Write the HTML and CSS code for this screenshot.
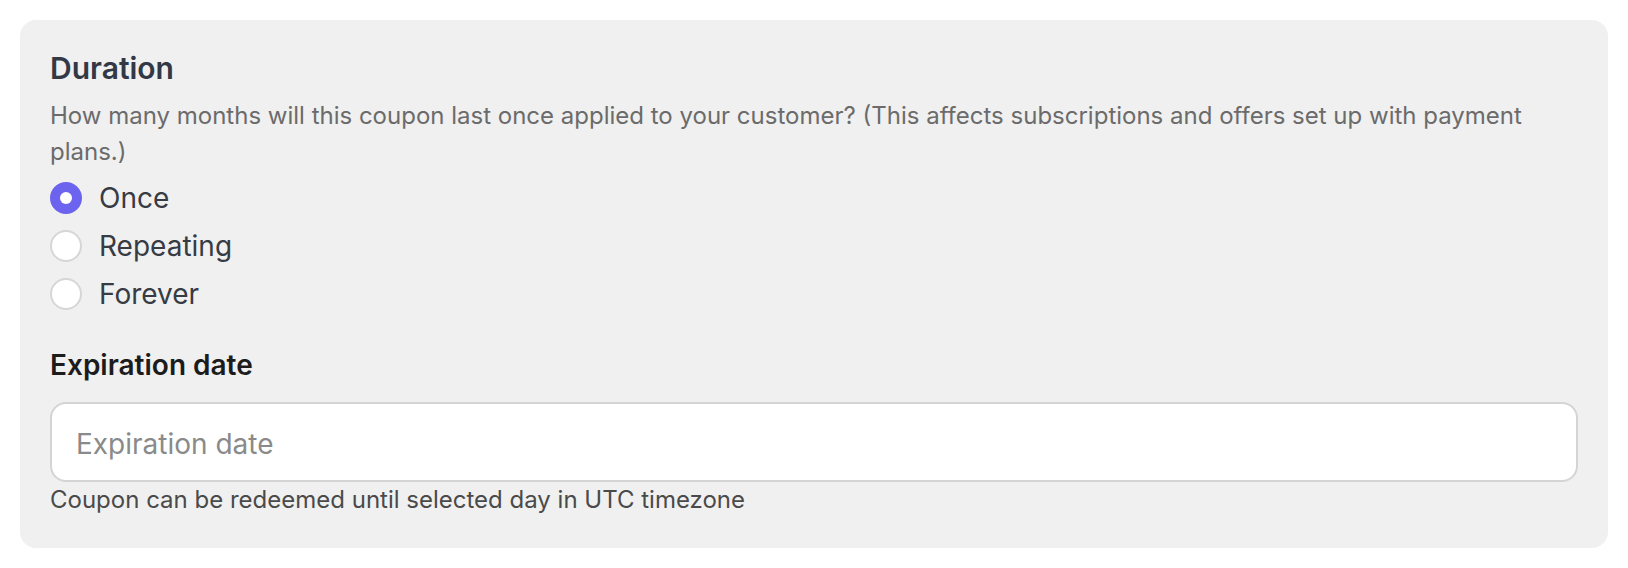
FILE: index.html
```html
<!DOCTYPE html>
<html lang="en">
<head>
<meta charset="utf-8">
<title>Coupon duration</title>
<link rel="stylesheet" href="styles.css">
</head>
<body>
<section class="card">
  <h2 class="title">Duration</h2>
  <p class="desc">How many months will this coupon last once applied to your customer? (This affects subscriptions and offers set up with payment plans.)</p>
  <div class="radios">
    <label class="radio-row"><span class="radio checked"></span><span class="radio-label">Once</span></label>
    <label class="radio-row"><span class="radio"></span><span class="radio-label">Repeating</span></label>
    <label class="radio-row"><span class="radio"></span><span class="radio-label">Forever</span></label>
  </div>
  <h3 class="field-title">Expiration date</h3>
  <div class="input"><span class="placeholder">Expiration date</span></div>
  <p class="help">Coupon can be redeemed until selected day in UTC timezone</p>
</section>
</body>
</html>
```
FILE: styles.css
```css
* { box-sizing: border-box; }
html, body { margin: 0; background: #ffffff; }
body {
  padding: 20px;
  font-family: Inter, "Noto Sans", "Liberation Sans", sans-serif;
}
.card {
  background: #f0f0f0;
  border-radius: 16px;
  padding: 30px 30px 32px 30px;
  height: 528px;
}
.title {
  margin: 0 0 12px 0;
  font-size: 30px;
  line-height: 36px;
  font-weight: 600;
  color: #323845;
}
.desc {
  margin: 0 0 4px 0;
  font-size: 24px;
  line-height: 36px;
  color: #6b6b6b;
}
.radios {
  display: flex;
  flex-direction: column;
}
.radio-row {
  display: flex;
  align-items: center;
  height: 48px;
  gap: 17px;
}
.radio {
  width: 32px;
  height: 32px;
  border-radius: 50%;
  background: #ffffff;
  border: 2px solid #d6d6d6;
  flex: none;
  display: flex;
  align-items: center;
  justify-content: center;
}
.radio.checked {
  background: #6c63ef;
  border-color: #6c63ef;
}
.radio.checked::after {
  content: "";
  width: 12px;
  height: 12px;
  border-radius: 50%;
  background: #ffffff;
}
.radio-label {
  font-size: 28px;
  line-height: 48px;
  color: #363b44;
}
.field-title {
  margin: 29px 0 19px 0;
  font-size: 28px;
  line-height: 36px;
  font-weight: 600;
  color: #1c1c1c;
}
.input {
  height: 80px;
  background: #ffffff;
  border: 2px solid #d4d4d4;
  border-radius: 16px;
  display: flex;
  align-items: center;
  padding: 4px 24px 0 24px;
}
.placeholder {
  font-size: 28px;
  color: #8a8a8a;
}
.help {
  margin: 1px 0 0 0;
  font-size: 24px;
  line-height: 34px;
  color: #4a4a4a;
}
```
